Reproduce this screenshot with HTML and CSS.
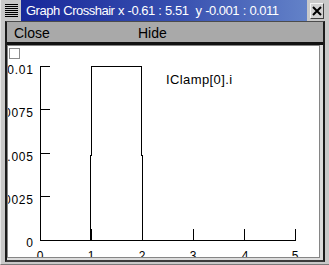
FILE: index.html
```html
<!DOCTYPE html>
<html>
<head>
<meta charset="utf-8">
<link rel="stylesheet" href="styles.css">
</head>
<body>
<div class="window">
  <div class="titlebar">
    <div class="menuicon">
      <svg width="20" height="21" viewBox="0 0 20 21">
        <g stroke="#000" stroke-width="1" shape-rendering="crispEdges">
          <line x1="4" y1="4.5" x2="17" y2="4.5"/>
          <line x1="4" y1="6.5" x2="17" y2="6.5"/>
          <line x1="4" y1="8.5" x2="17" y2="8.5"/>
          <line x1="4" y1="10.5" x2="17" y2="10.5"/>
          <line x1="4" y1="12.5" x2="17" y2="12.5"/>
          <line x1="4" y1="14.5" x2="17" y2="14.5"/>
          <line x1="4" y1="16.5" x2="17" y2="16.5"/>
        </g>
      </svg>
    </div>
    <div class="title">Graph Crosshair x -0.61 : 5.51  y -0.001 : 0.011</div>
    <div class="closearea">
      <div class="closebtn">
        <svg width="12" height="14" viewBox="0 0 12 14">
          <path d="M2 3 L10 11 M10 3 L2 11" stroke="#000" stroke-width="2" fill="none"/>
        </svg>
      </div>
    </div>
  </div>
  <div class="client">
    <div class="menubar">
      <span class="item item-close">Close</span>
      <span class="item">Hide</span>
    </div>
    <div class="canvas">
      <svg class="plot" width="310" height="211" viewBox="8 46 310 211">
        <rect class="check" x="9.5" y="48.5" width="10" height="10"/>
        <g stroke="#000" stroke-width="1" fill="none" shape-rendering="crispEdges">
          <line x1="40.5" y1="66" x2="40.5" y2="241"/>
          <line x1="40" y1="240.5" x2="296" y2="240.5"/>
          <line x1="40" y1="66.5" x2="50" y2="66.5"/>
          <line x1="40" y1="109.5" x2="50" y2="109.5"/>
          <line x1="40" y1="153.5" x2="50" y2="153.5"/>
          <line x1="40" y1="196.5" x2="50" y2="196.5"/>
          <line x1="91.5" y1="229" x2="91.5" y2="240"/>
          <line x1="142.5" y1="229" x2="142.5" y2="240"/>
          <line x1="193.5" y1="229" x2="193.5" y2="240"/>
          <line x1="244.5" y1="229" x2="244.5" y2="240"/>
          <line x1="295.5" y1="229" x2="295.5" y2="240"/>
          <polyline points="90.5,240 90.5,155.5 91.5,155.5 91.5,66.5 141.5,66.5 141.5,155.5 142.5,155.5 142.5,240"/>
        </g>
        <g class="ylab" text-anchor="end">
          <text x="33.8" y="74">0.01</text>
          <text x="33.8" y="117">0.0075</text>
          <text x="33.8" y="161">0.005</text>
          <text x="33.8" y="204">0.0025</text>
          <text x="33.8" y="247">0</text>
        </g>
        <g class="xlab" text-anchor="middle">
          <text x="40.5" y="260">0</text>
          <text x="91.5" y="260">1</text>
          <text x="142.5" y="260">2</text>
          <text x="193.5" y="260">3</text>
          <text x="245.5" y="260">4</text>
          <text x="295.5" y="260">5</text>
        </g>
        <text class="legend" x="166" y="84">IClamp[0].i</text>
      </svg>
    </div>
  </div>
</div>
</body>
</html>
```

FILE: styles.css
```css
html, body {
  margin: 0;
  padding: 0;
}
body {
  width: 329px;
  height: 265px;
  overflow: hidden;
  background: #c9c9c9;
  font-family: "Liberation Sans", Arial, sans-serif;
}
.window {
  width: 329px;
  height: 265px;
  display: flex;
  flex-direction: column;
  background: #c9c9c9;
  box-sizing: border-box;
  border-left: 1px solid #e8e8e8;
  border-bottom: 1px solid #7a7a7a;
}
.titlebar {
  height: 21px;
  display: flex;
  flex: none;
}
.menuicon {
  width: 20px;
  height: 21px;
  background: #c9c9c9;
}
.menuicon svg {
  display: block;
}
.title {
  flex: 1;
  background: linear-gradient(to right, #18289a, #3850b0 55%, #6382c8);
  color: #fff;
  font-size: 13px;
  letter-spacing: -0.5px;
  word-spacing: 0.5px;
  line-height: 21px;
  padding-left: 5px;
  white-space: pre;
  overflow: hidden;
}
.closearea {
  width: 22px;
  background: #c9c9c9;
  display: flex;
  padding: 3px 0 0 3px;
  box-sizing: border-box;
}
.closebtn {
  width: 14px;
  height: 16px;
  box-sizing: border-box;
  border: 1px solid;
  border-color: #f4f4f4 #404040 #404040 #f4f4f4;
  background: #d2d2d2;
  display: flex;
  align-items: center;
  justify-content: center;
}
.closebtn svg {
  display: block;
}
.client {
  flex: 1;
  margin: 0 4px 3px 4px;
  border-left: 2px solid #1c1c1c;
  border-right: 2px solid #1c1c1c;
  border-top: 1px solid #4c4c4c;
  border-bottom: 2px solid #3a3a3a;
  background: #dcdcdc;
  display: flex;
  flex-direction: column;
}
.menubar {
  flex: none;
  height: 18px;
  padding: 2px 0 0 7px;
  line-height: 18px;
  background: #a9a9a9;
  border-bottom: 3px solid #121212;
  font-size: 14px;
  color: #000;
  display: flex;
}
.item-close {
  width: 124px;
}
.canvas {
  flex: 1;
  margin-right: 3px;
  margin-bottom: 2px;
  border: 1px solid #858585;
  background: #fff;
  overflow: hidden;
}
.plot {
  display: block;
}
.check {
  fill: #fff;
  stroke: #8c8c8c;
  stroke-width: 1;
  shape-rendering: crispEdges;
}
.ylab text, .xlab text {
  font-family: "Liberation Sans", Arial, sans-serif;
  font-size: 12px;
  letter-spacing: 0.8px;
  fill: #000;
}
.legend {
  font-family: "Liberation Sans", Arial, sans-serif;
  font-size: 13px;
  letter-spacing: 0.4px;
  fill: #000;
}
```
